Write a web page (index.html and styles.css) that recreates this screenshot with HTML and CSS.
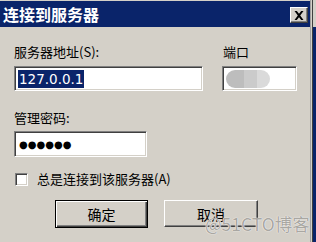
FILE: index.html
```html
<!DOCTYPE html>
<html>
<head>
<meta charset="utf-8">
<link rel="stylesheet" href="styles.css">
</head>
<body>
<div class="screen">
  <div class="window">
    <div class="titlebar">
      <span class="title">连接到服务器</span>
      <span class="close">
        <svg width="10" height="9" viewBox="0 0 10 9"><path d="M0.5 0h2.3l2.2 2.8L7.2 0h2.3L6.2 4.5 9.5 9H7.2L5 6.2 2.8 9H0.5l3.3-4.5z" fill="#000"/></svg>
      </span>
    </div>
    <div class="content">
      <div class="row-top">
        <div class="field">
          <label class="lbl">服务器地址(S):</label>
          <div class="input addr"><span class="sel">127.0.0.1</span></div>
        </div>
        <div class="field">
          <label class="lbl port-lbl">端口</label>
          <div class="input port"><span class="blob"></span></div>
        </div>
      </div>
      <div class="field pw-field">
        <label class="lbl">管理密码:</label>
        <div class="input pw"><span class="dots">●●●●●●</span></div>
      </div>
      <div class="check-row">
        <span class="checkbox"></span>
        <span class="lbl">总是连接到该服务器(A)</span>
      </div>
      <div class="buttons">
        <div class="btn default"><span>确定</span></div>
        <div class="btn"><span>取消</span></div>
      </div>
    </div>
    <div class="watermark">@51CTO博客</div>
  </div>
  <div class="edge"></div>
  <div class="beyond"><div class="beyond-top"></div></div>
</div>
</body>
</html>
```
FILE: styles.css
```css
* { box-sizing: border-box; }
html, body { margin: 0; padding: 0; }
body {
  width: 316px;
  height: 242px;
  overflow: hidden;
  background: #d4d0c8;
  font-family: "Noto Sans CJK SC", "DejaVu Sans", sans-serif;
  font-size: 13px;
  color: #000;
}
.screen { display: flex; height: 242px; }
.window {
  position: relative;
  width: 310px;
  height: 242px;
  background: #d4d0c8;
  padding-top: 1px;
}
.edge {
  width: 3px;
  background: #d4d0c8;
  border-left: 1px solid #a0a0a0;
  border-right: 1px solid #404040;
}
.beyond { flex: 1; background: #0a246a; }
.beyond-top { height: 27px; background: #d4d0c8; }
.titlebar {
  height: 26px;
  background: #0a246a;
  display: flex;
  align-items: center;
  justify-content: space-between;
  padding-left: 3px;
  padding-right: 2px;
}
.title {
  color: #fff;
  font-weight: bold;
  font-size: 16px;
  line-height: 17px;
}
.close {
  width: 18px;
  height: 16px;
  margin-top: 2px;
  background: #d4d0c8;
  border-top: 1px solid #fff;
  border-left: 1px solid #fff;
  border-right: 1px solid #404040;
  border-bottom: 1px solid #404040;
  box-shadow: inset -1px -1px 0 #808080;
  display: flex;
  align-items: center;
  justify-content: center;
}
.content {
  padding: 17px 0 0 14px;
}
.row-top {
  display: flex;
  gap: 19px;
}
.field { display: flex; flex-direction: column; }
.lbl {
  display: block;
  line-height: 16px;
  height: 16px;
  white-space: nowrap;
}
.port-lbl { padding-left: 1px; }
.input {
  margin-top: 6px;
  height: 25px;
  background: #fff;
  border-top: 1px solid #808080;
  border-left: 1px solid #808080;
  border-right: 1px solid #fff;
  border-bottom: 1px solid #fff;
  box-shadow: inset 1px 1px 0 #404040, inset -1px -1px 0 #d4d0c8;
  display: flex;
  align-items: center;
  padding-left: 3px;
}
.addr { width: 189px; }
.port { width: 75px; }
.sel {
  background: #0a246a;
  color: #fff;
  font-family: "DejaVu Sans", sans-serif;
  font-size: 13.5px;
  line-height: 18px;
  padding: 0 1px;
}
.blob {
  width: 44px;
  height: 18px;
  border-radius: 9px;
  background: linear-gradient(90deg, #bdbdbd 0 40%, #cbcbcb 40% 70%, #dadada 70%);
  filter: blur(0.6px);
}
.pw-field { margin-top: 19px; }
.pw { width: 133px; height: 26px; margin-top: 5px; }
.dots {
  font-family: "DejaVu Sans", sans-serif;
  font-size: 10px;
  padding-left: 1px;
}
.check-row {
  margin-top: 14px;
  display: flex;
  align-items: center;
  gap: 9px;
}
.checkbox {
  width: 13px;
  height: 13px;
  margin-left: 1px;
  background: #fff;
  border-top: 1px solid #808080;
  border-left: 1px solid #808080;
  border-right: 1px solid #fff;
  border-bottom: 1px solid #fff;
  box-shadow: inset 1px 1px 0 #404040, inset -1px -1px 0 #d4d0c8;
}
.buttons {
  margin-top: 13px;
  padding-left: 41px;
  display: flex;
  gap: 16px;
  align-items: flex-start;
}
.btn {
  width: 94px;
  height: 27px;
  background: #d4d0c8;
  border-top: 1px solid #fff;
  border-left: 1px solid #fff;
  border-right: 1px solid #404040;
  border-bottom: 1px solid #404040;
  box-shadow: inset -1px -1px 0 #808080;
  display: flex;
  align-items: center;
  justify-content: center;
  font-size: 14px;
}
.btn.default {
  width: 93px;
  height: 28px;
  border: 1px solid #000;
  box-shadow: inset 1px 1px 0 #fff, inset -1px -1px 0 #404040, inset -2px -2px 0 #808080;
}
.watermark {
  position: absolute;
  left: 205px;
  top: 213px;
  font-size: 17.5px;
  line-height: 22px;
  color: #a9a7a2;
  text-shadow: 0 0 1px #fff, 0 0 1px #fff;
  white-space: nowrap;
}
```
